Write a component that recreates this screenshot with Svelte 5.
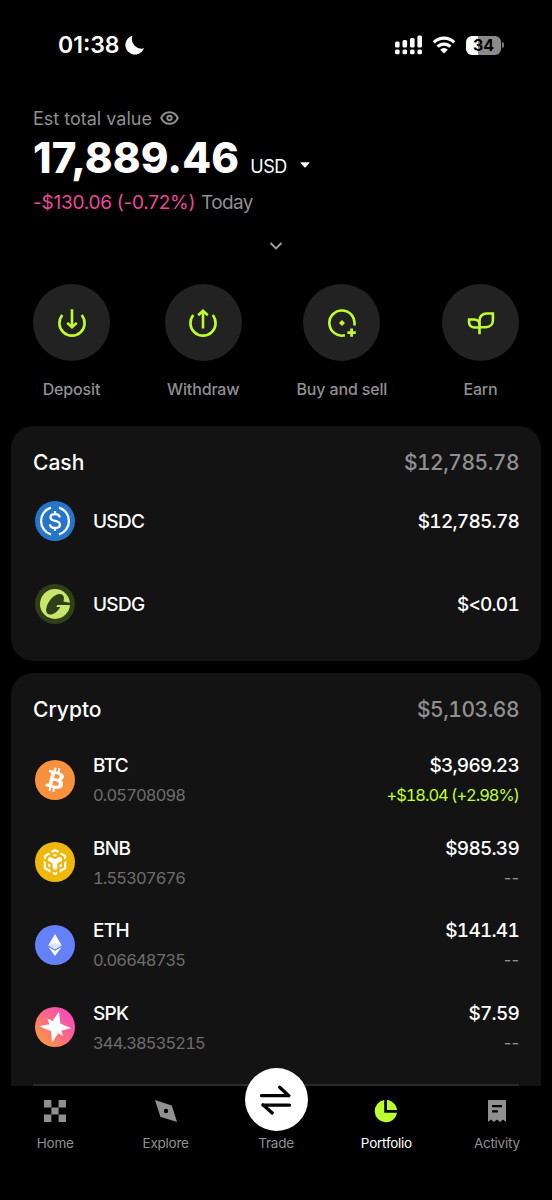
<script lang="ts">
    interface Asset {
        symbol: string;
        icon: string;
        value: string;
        amount?: string;
        change?: string;
    }

    const cash: Asset[] = [
        { symbol: "USDC", icon: "usdc", value: "$12,785.78" },
        { symbol: "USDG", icon: "usdg", value: "$<0.01" },
    ];

    const crypto: Asset[] = [
        {
            symbol: "BTC",
            icon: "btc",
            value: "$3,969.23",
            amount: "0.05708098",
            change: "+$18.04 (+2.98%)",
        },
        { symbol: "BNB", icon: "bnb", value: "$985.39", amount: "1.55307676" },
        { symbol: "ETH", icon: "eth", value: "$141.41", amount: "0.06648735" },
        { symbol: "SPK", icon: "spk", value: "$7.59", amount: "344.38535215" },
    ];

    const actions = ["Deposit", "Withdraw", "Buy and sell", "Earn"];
    const tabs = ["Home", "Explore", "Trade", "Portfolio", "Activity"];

    let activeTab = $state("Portfolio");
</script>

{#snippet coin(name: string)}
    <svg class="coin" viewBox="0 0 40 40">
        {#if name === "usdc"}
            <circle cx="20" cy="20" r="20" fill="#2775ca" />
            <g fill="none" stroke="#fff" stroke-width="2.3">
                <path d="M16 6.6a14 14 0 0 0 0 26.8M24 6.6a14 14 0 0 1 0 26.8" />
                <path d="M24.7 16.4c-.3-2.2-2-3.3-4.7-3.3-2.8 0-4.5 1.2-4.5 3.3 0 4.8 9.4 2.2 9.4 7.1 0 2.2-2 3.5-4.9 3.5-3 0-4.7-1.3-5-3.7M20 10v3.5M20 26.5V30" />
            </g>
        {:else if name === "usdg"}
            <circle cx="20" cy="20" r="20" fill="#2f3f17" />
            <circle cx="20" cy="20" r="15" fill="#c8e66b" />
            <path
                d="M28.4 17.6c1.4-4.2.2-7.4-3.2-7.6-5-.3-11.6 6-13.5 12.5-1.4 4.7 0 8 3.4 8 3.7 0 8-3.2 10.1-7.6h-3.9l1-1.8H36v-2.2z"
                fill="#2f3f17"
            />
        {:else if name === "btc"}
            <circle cx="20" cy="20" r="20" fill="#f7913d" />
            <path
                d="M28.8 17.2c.4-2.6-1.6-4-4.3-4.9l.9-3.5-2.1-.5-.9 3.4-1.7-.4.9-3.4-2.1-.6-.9 3.5-4.3-1.1-.6 2.3s1.6.4 1.5.4c.9.2 1 .8 1 1.2l-2.4 9.7c-.1.3-.4.7-1 .5l-1.5-.4-1.1 2.5 4.1 1-.9 3.6 2.1.5.9-3.5 1.7.4-.9 3.5 2.1.5.9-3.5c3.7.7 6.4.4 7.6-2.9.9-2.7 0-4.2-2-5.2 1.4-.3 2.6-1.3 3-3.1zm-5 7c-.7 2.7-5.1 1.2-6.6.9l1.2-4.7c1.5.4 6.1 1.1 5.4 3.800zm.7-7c-.6 2.400-4.300 1.200-5.500.9l1.100-4.300c1.200.3 5.100.9 4.400 3.400z"
                fill="#fff"
            />
        {:else if name === "bnb"}
            <circle cx="20" cy="20" r="20" fill="#efb80b" />
            <path
                d="M15.5 10.2 20 7.5l4.5 2.7-2.3 1.4L20 10.300l-2.200 1.300zM13.200 11.600l2.300 1.400-4.800 2.900v2.700l-2.300-1.400v-2.700zM26.800 11.600 24.500 13l4.800 2.900v2.700l2.300-1.400v-2.700zM17.700 14.300 20 12.900l2.300 1.400L20 15.700zM12.900 17.100l2.300-1.400L20 18.500l4.800-2.800 2.300 1.400v2.800l-4.700 2.800v5.500L20 29.600l-2.400-1.400v-5.500l-4.700-2.800zM8.400 20l2.300 1.400v5.500l4.700 2.700v2.800l-7-4.100zM31.600 20l-2.300 1.400v5.500l-4.700 2.700v2.800l7-4.100zM12.900 22.800l2.300 1.300v2.800l-2.300-1.400zM27.100 22.800l-2.300 1.300v2.800l2.300-1.400zM17.700 31l2.300 1.300 2.300-1.300v2.700L20 35l-2.300-1.300z"
                fill="#fff"
                transform="translate(.6 -.6) scale(.97)"
            />
        {:else if name === "eth"}
            <circle cx="20" cy="20" r="20" fill="#6481f7" />
            <path d="m20 9 6.6 11.3L20 24.2l-6.6-3.9z" fill="#fff" />
            <path d="m13.4 21.9 6.6 3.8 6.6-3.8L20 31z" fill="#fff" />
            <path d="m13.4 20.3 6.6-2.6 6.6 2.6-6.6 3.9z" fill="#dfe5fd" />
        {:else}
            <defs>
                <linearGradient id="spk-fill" x1="0" y1="1" x2="1" y2="0">
                    <stop offset=".1" stop-color="#fa9c3c" />
                    <stop offset=".48" stop-color="#fb6c84" />
                    <stop offset=".8" stop-color="#f94fb4" />
                </linearGradient>
            </defs>
            <circle cx="20" cy="20" r="20" fill="url(#spk-fill)" />
            <path
                d="m24 4.6 1.3 12 10.9 4.6-9.8 2.3 1.7 5.6-4.9-2.9-6.2 9.6-.8-11.6L4.2 19.3l10.2-2.1-2.1-5.8 5.3 2.7z"
                fill="#fff"
            />
        {/if}
    </svg>
{/snippet}

{#snippet assetRow(asset: Asset)}
    <div class="asset">
        {@render coin(asset.icon)}
        <div class="asset-name">
            <span class="symbol">{asset.symbol}</span>
            {#if asset.amount}
                <span class="amount">{asset.amount}</span>
            {/if}
        </div>
        <div class="asset-value">
            <span class="price">{asset.value}</span>
            {#if asset.change}
                <span class="change">{asset.change}</span>
            {:else if asset.amount}
                <span class="change none">--</span>
            {/if}
        </div>
    </div>
{/snippet}

<div class="screen">
    <div class="status">
        <span class="clock">01:38</span>
        <svg class="moon" width="20" height="20" viewBox="0 0 20 20">
            <path d="M7.3.8A9.6 9.6 0 1 0 19 13.3 9.8 9.8 0 0 1 7.3.8z" fill="#fff" />
        </svg>
        <svg class="signal" width="28" height="20" viewBox="0 0 28 20">
            <g fill="#fff">
                <rect x="0" y="6.5" width="4.6" height="6" rx="1.5" />
                <rect x="7.5" y="5" width="4.6" height="7.5" rx="1.5" />
                <rect x="15" y="3" width="4.6" height="9.5" rx="1.5" />
                <rect x="22.4" y="0.5" width="4.6" height="12" rx="1.5" />
                <rect x="0" y="14.5" width="4.6" height="4.7" rx="1.5" />
                <rect x="7.5" y="14.5" width="4.6" height="4.7" rx="1.5" />
                <rect x="15" y="14.5" width="4.6" height="4.7" rx="1.5" />
                <rect x="22.4" y="14.5" width="4.6" height="4.7" rx="1.5" />
            </g>
        </svg>
        <svg class="wifi" width="24" height="18" viewBox="0 0 24 18">
            <g fill="none" stroke="#fff" stroke-width="3.3">
                <path d="M1.7 6.3a14.6 14.6 0 0 1 20.6 0" />
                <path d="M5.6 10.7a9 9 0 0 1 12.8 0" />
            </g>
            <path d="M12 17.5 8.2 13.7a5.3 5.3 0 0 1 7.6 0z" fill="#fff" />
        </svg>
        <div class="battery"><span>34</span></div>
        <div class="battery-cap"></div>
    </div>

    <header class="summary">
        <div class="caption">
            <span>Est total value</span>
            <svg width="19" height="14" viewBox="0 0 19 14" fill="none" stroke="#909090" stroke-width="1.9">
                <path d="M1.2 7C4.7-.7 14.3-.7 17.8 7 14.3 14.7 4.7 14.7 1.2 7z" />
                <circle cx="9.5" cy="7" r="2.2" />
            </svg>
        </div>
        <div class="total">
            <span class="total-value">17,889.46</span>
            <span class="currency">USD</span>
            <svg width="10" height="6" viewBox="0 0 10 6">
                <path d="M1 .3h8q.8 0 .3.7L5.6 5.2q-.6.6-1.2 0L.7 1Q.2.3 1 .3z" fill="#fff" />
            </svg>
        </div>
        <div class="today">
            <span class="loss">-$130.06 (-0.72%)</span>
            <span class="today-label">Today</span>
        </div>
        <svg class="expand" width="14" height="8" viewBox="0 0 14 8">
            <path d="m1.5 1 5.5 5.5L12.5 1" fill="none" stroke="#a0a0a0" stroke-width="1.9" />
        </svg>
    </header>

    <div class="actions">
        {#each actions as action (action)}
            <button class="action">
                <span class="action-icon">
                    <svg
                        width="30"
                        height="30"
                        viewBox="0 0 30 30"
                        fill="none"
                        stroke="#bcff2f"
                        stroke-width="2.6"
                    >
                        {#if action === "Deposit"}
                            <path d="M5.3 7a12.6 12.6 0 1 0 19.4 0" />
                            <path d="M15 1.2v17.6M10.2 14.9l4.8 4.4 4.8-4.4" />
                        {:else if action === "Withdraw"}
                            <path d="M5.3 7a12.6 12.6 0 1 0 19.4 0" />
                            <path d="M15 20.5V3M10.2 7.2 15 2.8l4.8 4.4" />
                        {:else if action === "Buy and sell"}
                            <path d="M17.9 27.3A12.6 12.6 0 1 1 27.3 17.6" />
                            <path d="m15 12 3 3-3 3-3-3z" fill="#bcff2f" stroke="none" />
                            <path d="M24.6 20.4v8.4M20.4 24.6h8.4" stroke-width="2.8" />
                        {:else}
                            <path d="M13.5 26.2V12.5c0-4 3-7 7-7h6.4v6.700c0 4-2.900 7-7 7h-6.400" />
                            <path d="M13.500 19.500H8.600c-3.200 0-5.500-2-5.500-5v-3h5c3.200 0 5.400 2 5.400 5" />
                        {/if}
                    </svg>
                </span>
                <span class="action-label">{action}</span>
            </button>
        {/each}
    </div>

    <section class="card">
        <div class="card-head">
            <h2>Cash</h2>
            <span class="card-total">$12,785.78</span>
        </div>
        {#each cash as asset (asset.symbol)}
            {@render assetRow(asset)}
        {/each}
    </section>

    <section class="card crypto">
        <div class="card-head">
            <h2>Crypto</h2>
            <span class="card-total">$5,103.68</span>
        </div>
        {#each crypto as asset (asset.symbol)}
            {@render assetRow(asset)}
        {/each}
        <div class="divider"></div>
    </section>

    <nav class="tabs">
        {#each tabs as tab (tab)}
            <button
                class="tab"
                class:active={activeTab === tab}
                onclick={() => (activeTab = tab)}
            >
                {#if tab === "Trade"}
                    <span class="trade">
                        <svg width="32" height="30" viewBox="0 0 32 30" fill="none" stroke="#000" stroke-width="3.3">
                            <path d="M1.500 10.600h26.500M19.600 2.300l9.200 8.400" stroke-linecap="round" stroke-linejoin="round" />
                            <path d="M3 20.200h26.500M12.200 27.900 3 19.800" stroke-linecap="round" stroke-linejoin="round" />
                        </svg>
                    </span>
                {:else}
                    <svg class="tab-icon" width="24" height="24" viewBox="0 0 24 24" fill="currentColor">
                        {#if tab === "Home"}
                            <path d="M1 1h7.4v7.4H1zM15.6 1H23v7.4h-7.4zM8.4 8.4h7.2v7.2H8.4zM1 15.6h7.4V23H1zM15.6 15.6H23V23h-7.4z" />
                        {:else if tab === "Explore"}
                            <path
                                fill-rule="evenodd"
                                d="m1 1 16.8 5.4L23 23 6.4 17.8zM12 9.8a2.2 2.2 0 1 0 0 4.4 2.2 2.2 0 0 0 0-4.4z"
                            />
                        {:else if tab === "Portfolio"}
                            <path d="M10.2 1v12.8H23A11.2 11.2 0 1 1 10.2 1z" />
                            <path d="M13 1c5 .5 9.5 4.5 10 10H13z" />
                        {:else}
                            <path
                                fill-rule="evenodd"
                                d="M3 1h18v22l-2.9-2.4-3 2.4-3.1-2.4L8.9 23l-3-2.4L3 23zM7 6v2.3h10V6zM7 11.3v2.3h6v-2.3z"
                            />
                        {/if}
                    </svg>
                {/if}
                <span class="tab-label">{tab}</span>
            </button>
        {/each}
    </nav>
</div>

<style>
    :global(body) {
        background: #000;
    }

    .screen {
        display: flex;
        flex-direction: column;
        height: 1200px;
        overflow: hidden;
        background: #000;
        color: #fff;
        font-family: Inter, "Liberation Sans", sans-serif;
    }

    .status {
        display: flex;
        align-items: center;
        box-sizing: border-box;
        height: 90px;
        padding: 0 49px 0 58px;
    }

    .clock {
        font-size: 23px;
        font-weight: 600;
    }

    .moon {
        margin-left: 5px;
    }

    .signal {
        margin-left: auto;
    }

    .wifi {
        margin-left: 9px;
    }

    .battery {
        display: flex;
        align-items: center;
        justify-content: center;
        width: 35px;
        height: 19px;
        margin-left: 10px;
        border-radius: 6px;
        background: linear-gradient(90deg, #fff 34%, #8b8b8b 34%);
        color: #000;
        font-size: 16px;
        font-weight: 700;
    }

    .battery-cap {
        width: 2px;
        height: 6px;
        margin: 0 -1px 0 1px;
        border-radius: 0 2px 2px 0;
        background: #777;
    }

    .summary {
        display: flex;
        flex-direction: column;
        height: 194px;
        padding: 0 33px;
    }

    .caption {
        display: flex;
        align-items: center;
        gap: 8px;
        height: 24px;
        margin-top: 16px;
        color: #909090;
        font-size: 18px;
    }

    .total {
        display: flex;
        align-items: baseline;
        height: 59px;
        line-height: 56px;
    }

    .total-value {
        font-size: 42px;
        font-weight: 800;
        letter-spacing: 0.1px;
    }

    .currency {
        margin-left: 11px;
        font-size: 18px;
        letter-spacing: -0.4px;
    }

    .total svg {
        align-self: center;
        margin: 10px 0 0 13px;
    }

    .today {
        display: flex;
        gap: 6px;
        height: 26px;
        line-height: 27px;
        font-size: 19px;
        letter-spacing: -0.25px;
    }

    .loss {
        color: #ec4899;
    }

    .today-label {
        color: #909090;
        letter-spacing: -0.6px;
    }

    .expand {
        align-self: center;
        margin-top: 27px;
    }

    .actions {
        display: flex;
        justify-content: space-between;
        height: 142px;
        padding: 0 33px;
    }

    .action {
        display: flex;
        flex-direction: column;
        align-items: center;
        padding: 0;
        border: none;
        background: none;
        font-family: inherit;
        cursor: pointer;
    }

    .action-icon {
        display: flex;
        align-items: center;
        justify-content: center;
        width: 77px;
        height: 77px;
        border-radius: 50%;
        background: #222;
    }

    .action-label {
        margin-top: 17px;
        color: #909090;
        font-size: 16px;
        font-weight: 500;
        letter-spacing: -0.15px;
        line-height: 22px;
    }

    .card {
        box-sizing: border-box;
        height: 235px;
        margin: 0 11px 12px;
        padding: 20px 22px 0;
        border-radius: 22px;
        background: #131313;
    }

    .crypto {
        height: 413px;
        margin-bottom: 0;
        border-radius: 22px 22px 0 0;
    }

    .card-head {
        display: flex;
        align-items: center;
        justify-content: space-between;
        height: 34px;
        font-size: 21px;
        line-height: 32px;
    }

    .crypto .card-head {
        margin-bottom: 11.5px;
    }

    h2 {
        margin: 0;
        font-size: inherit;
        font-weight: 500;
    }

    .card-total {
        color: #909090;
        font-weight: 500;
        letter-spacing: -0.5px;
        font-variant-numeric: tabular-nums;
    }

    .asset {
        display: flex;
        align-items: center;
        height: 82.5px;
    }

    .coin {
        width: 40px;
        height: 40px;
        margin-left: 2px;
    }

    .asset-name {
        display: flex;
        flex-direction: column;
        margin-left: 18px;
        padding-top: 2px;
    }

    .asset-value {
        display: flex;
        flex-direction: column;
        align-items: flex-end;
        margin-left: auto;
        padding-top: 2px;
        font-variant-numeric: tabular-nums;
    }

    .symbol,
    .price {
        font-size: 19px;
        font-weight: 500;
        line-height: 30px;
    }

    .symbol {
        letter-spacing: -0.7px;
    }

    .price {
        letter-spacing: -0.75px;
    }

    .amount,
    .change {
        color: #6e6e6e;
        font-size: 16.5px;
        line-height: 29px;
    }

    .amount {
        letter-spacing: -0.85px;
        font-variant-numeric: tabular-nums;
    }

    .change {
        color: #bcff2f;
        letter-spacing: -1.05px;
    }

    .change.none {
        color: #909090;
        font-variant-numeric: normal;
        letter-spacing: 0;
    }

    .divider {
        height: 2px;
        margin-top: 15px;
        background: #2b2b2b;
    }

    .tabs {
        display: flex;
        height: 114px;
        background: #000;
    }

    .tab {
        display: flex;
        flex: 1;
        flex-direction: column;
        align-items: center;
        padding: 13px 0 0;
        border: none;
        background: none;
        color: #909090;
        font-family: inherit;
        cursor: pointer;
    }

    .trade {
        display: flex;
        align-items: center;
        justify-content: center;
        width: 63px;
        height: 63px;
        margin: -31px 0 -8px;
        border-radius: 50%;
        background: #fff;
    }

    .tab-label {
        margin-top: 10px;
        font-size: 13.5px;
        letter-spacing: -0.25px;
        line-height: 20px;
    }

    .tab.active {
        color: #bcff2f;
    }

    .active .tab-label {
        color: #fff;
    }
</style>
